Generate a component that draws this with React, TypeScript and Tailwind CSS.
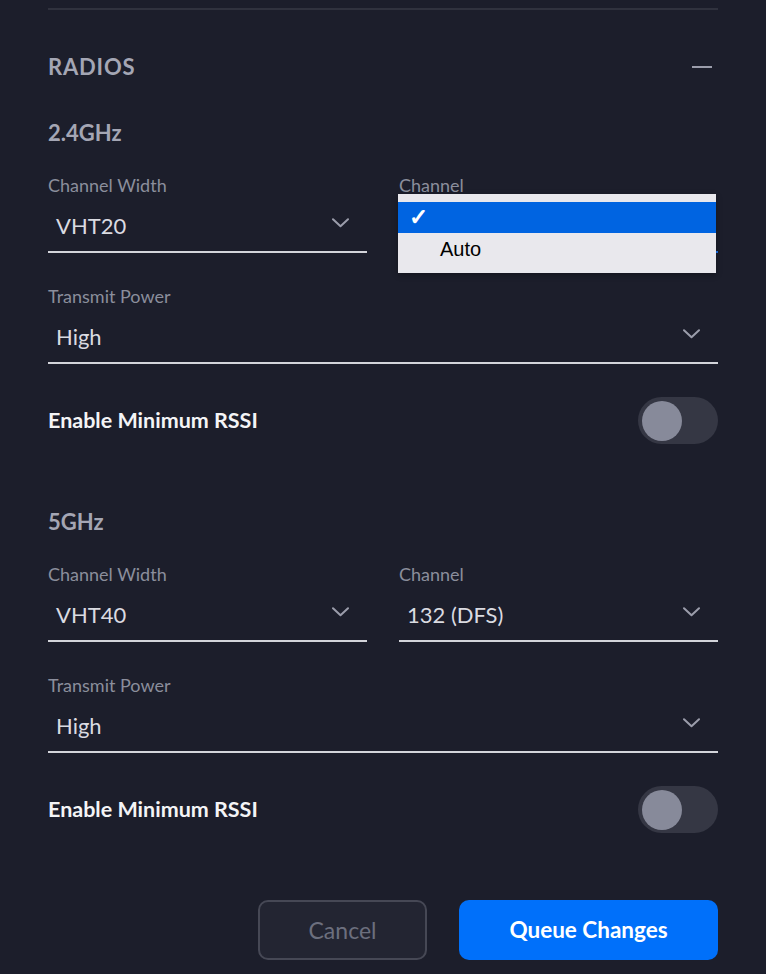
function Chevron() {
  return (
    <svg width="17" height="10" viewBox="0 0 17 10" className="mt-[6px] text-[#9b9dab]" fill="none">
      <path d="M1 1.2 L8.5 8.2 L16 1.2" stroke="currentColor" strokeWidth="2" strokeLinecap="round" strokeLinejoin="round" />
    </svg>
  );
}

function SelectField({
  label,
  value,
  focused = false,
  open = false,
}: {
  label: string;
  value: string;
  focused?: boolean;
  open?: boolean;
}) {
  return (
    <div className="relative">
      <div className="h-[20px] text-[18px] leading-[20px] text-[#8b8e9c]">{label}</div>
      <div
        className={`flex h-[58px] items-start justify-between border-b-2 pl-2 pr-[18px] pt-[17px] ${
          focused ? 'border-[#1a73f0]' : 'border-[#d3d4da]'
        }`}
      >
        <span className="text-[22px] leading-[28px] text-[#dadbe1]">{value}</span>
        <Chevron />
      </div>
      {open && (
        <div className="absolute left-[-1px] top-[19px] z-10 w-[318px] bg-[#e9e8ed] py-[8px] font-['Liberation_Sans',Arial,sans-serif] shadow-[0_2px_6px_rgba(0,0,0,0.3)]">
          <div className="flex h-[31px] items-center bg-[#0064e1] pl-[11px] text-[23px] font-bold text-white">
            ✓
          </div>
          <div className="flex h-[32px] items-center pl-[42px] text-[20px] text-black">Auto</div>
        </div>
      )}
    </div>
  );
}

function Toggle() {
  return (
    <div className="flex h-[47px] w-[80px] items-center rounded-full bg-[#353744] pl-[4px]">
      <div className="h-[40px] w-[40px] rounded-full bg-[#878a9a]" />
    </div>
  );
}

function Band({
  name,
  width,
  channel,
  channelOpen = false,
  className = '',
}: {
  name: string;
  width: string;
  channel: string;
  channelOpen?: boolean;
  className?: string;
}) {
  return (
    <div className={className}>
      <h3 className="text-[22px] font-bold leading-[24px] text-[#a4a6b4]">{name}</h3>
      <div className="mt-[30px] grid grid-cols-2 gap-8">
        <SelectField label="Channel Width" value={width} />
        <SelectField label="Channel" value={channel} focused={channelOpen} open={channelOpen} />
      </div>
      <div className="mt-[33px]">
        <SelectField label="Transmit Power" value="High" />
      </div>
      <div className="mt-[33px] flex h-[47px] items-center justify-between">
        <span className="text-[21.5px] font-bold text-[#f4f4f6]">Enable Minimum RSSI</span>
        <Toggle />
      </div>
    </div>
  );
}

export default function App() {
  return (
    <div className="min-h-[974px] w-full bg-[#1c1e2b] font-['Lato','Noto_Sans',sans-serif]">
      <div className="mx-[48px] pt-[8px]">
        <div className="h-[2px] bg-[#30323e]" />

        {/* Section header */}
        <div className="mt-[45px] flex h-[24px] items-center justify-between">
          <h2 className="text-[22px] font-bold leading-[24px] tracking-[0.8px] text-[#a4a6b4]">RADIOS</h2>
          <div className="mr-[6px] h-[2px] w-[20px] bg-[#9b9dab]" />
        </div>

        <Band name="2.4GHz" width="VHT20" channel="" channelOpen className="mt-[42px]" />
        <Band name="5GHz" width="VHT40" channel="132 (DFS)" className="mt-[66px]" />

        <div className="mt-[67px] flex justify-end gap-8">
          <button className="h-[60px] w-[169px] rounded-[10px] border-2 border-[#464855] bg-[#232532] text-[23px] text-[#6c6f7e]">
            Cancel
          </button>
          <button className="h-[60px] w-[259px] rounded-[10px] bg-[#0070fa] text-[22.5px] font-bold text-white">
            Queue Changes
          </button>
        </div>
      </div>
    </div>
  );
}
